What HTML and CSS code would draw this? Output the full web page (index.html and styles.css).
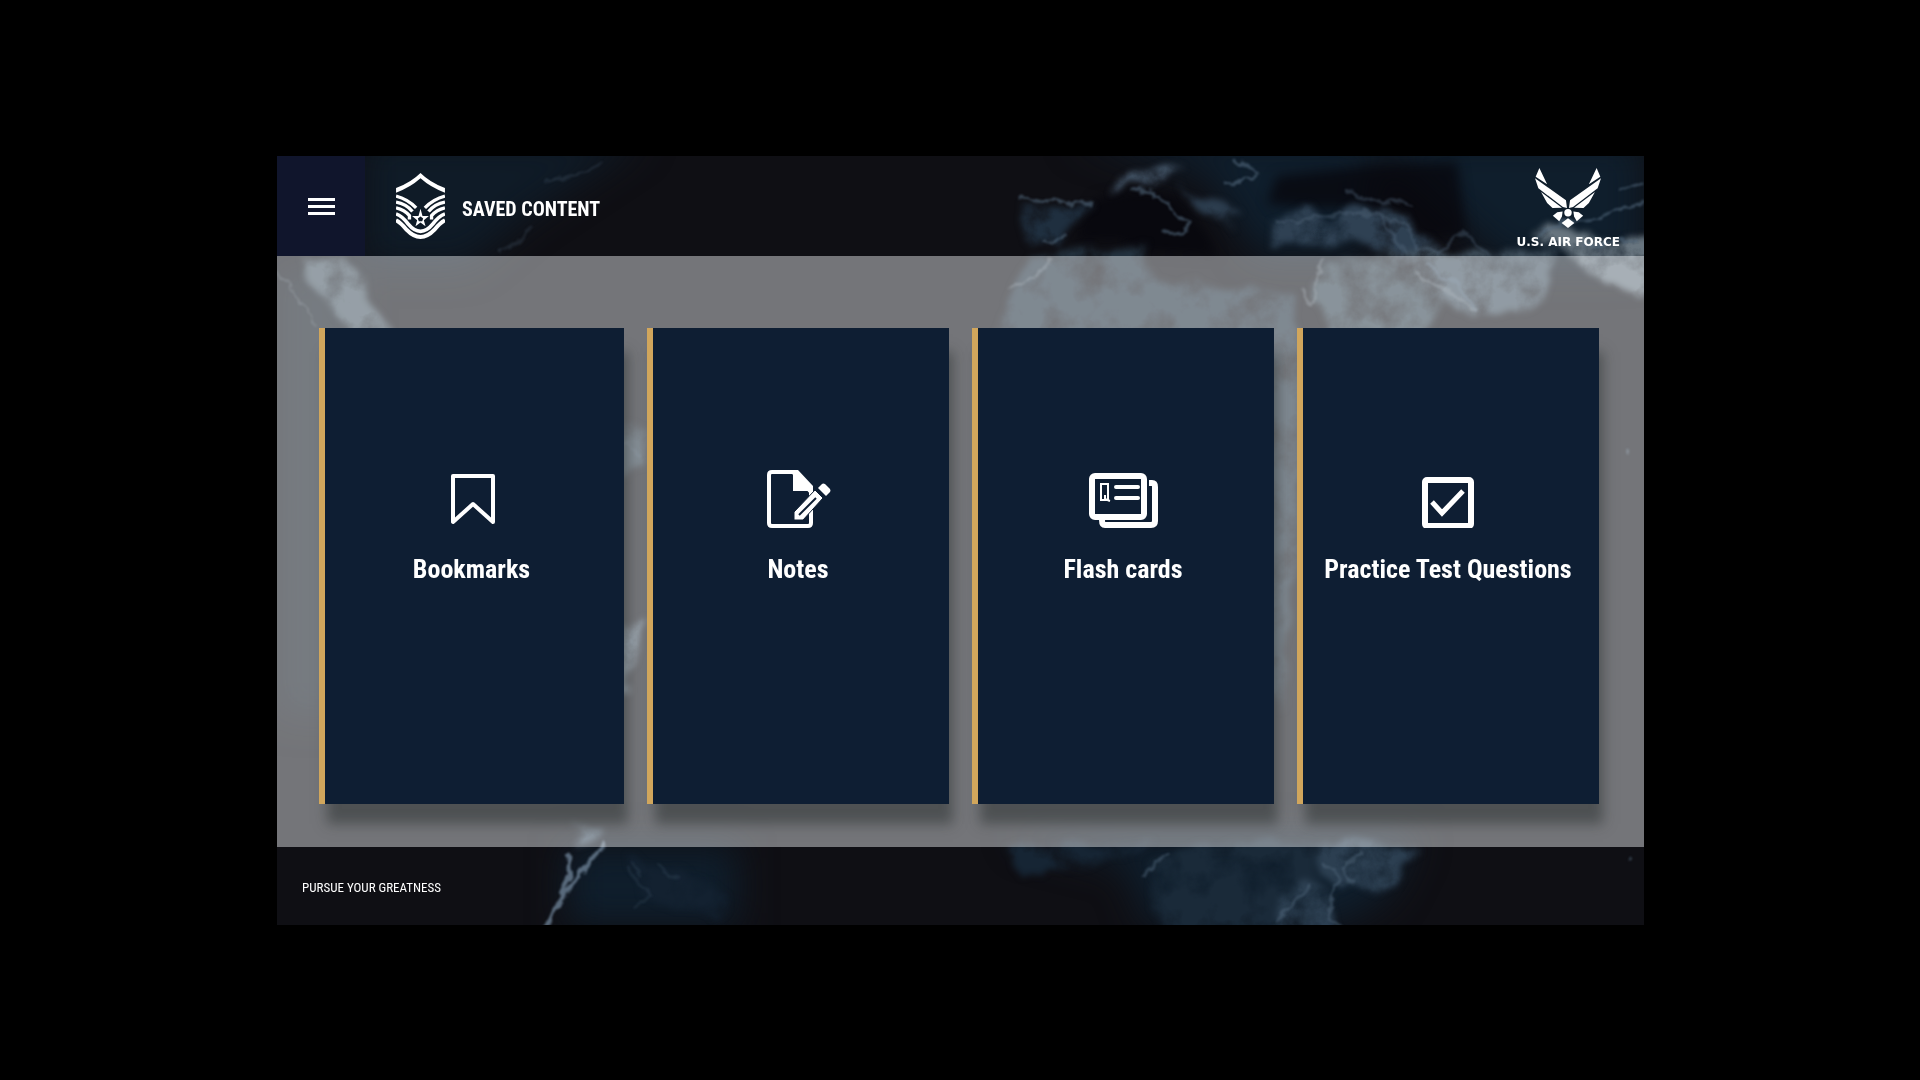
FILE: index.html
```html
<!DOCTYPE html>
<html lang="en">
<head>
<meta charset="utf-8">
<title>Saved Content</title>
<link rel="stylesheet" href="styles.css">
</head>
<body>
<div class="app">
  <svg class="map" viewBox="0 0 1367 769" preserveAspectRatio="none" aria-hidden="true">
    <defs>
      <filter id="land" x="-10%" y="-10%" width="120%" height="120%" color-interpolation-filters="sRGB">
        <feTurbulence type="fractalNoise" baseFrequency="0.03" numOctaves="5" seed="4" result="n"/>
        <feDisplacementMap in="SourceGraphic" in2="n" scale="26" xChannelSelector="R" yChannelSelector="G" result="d"/>
        <feGaussianBlur in="d" stdDeviation="3" result="b"/>
        <feColorMatrix in="n" type="matrix" values="0 0 0 0 0  0 0 0 0 0  0 0 0 0 0  2 0 0 0 -0.2" result="m"/>
        <feComposite in="b" in2="m" operator="in"/>
      </filter>
      <filter id="ridge" x="-10%" y="-10%" width="120%" height="120%" color-interpolation-filters="sRGB">
        <feTurbulence type="fractalNoise" baseFrequency="0.06" numOctaves="3" seed="9" result="n"/>
        <feDisplacementMap in="SourceGraphic" in2="n" scale="14" xChannelSelector="R" yChannelSelector="G" result="d"/>
        <feGaussianBlur in="d" stdDeviation="1"/>
      </filter>
      <filter id="soft" x="-30%" y="-30%" width="160%" height="160%" color-interpolation-filters="sRGB"><feGaussianBlur stdDeviation="18"/></filter>
      <filter id="sea" x="-10%" y="-30%" width="120%" height="160%" color-interpolation-filters="sRGB"><feGaussianBlur stdDeviation="6"/></filter>
    </defs>
    <rect width="1367" height="769" fill="#0f0f14"/>
    <g filter="url(#soft)" fill="#0f1e2c">
      <path d="M85-20H370L250 60 190 110H85Z" opacity=".8"/>
      <path d="M790-20H1367V110H1230L1100-10 1090 100H980L930 20Z"/>
      <path d="M290 690H460V769H290ZM730 680H1140L1110 740 1060 769H870L850 710Z"/>
      <path d="M0 110H80V560H0Z" fill="#16222c" opacity=".6"/>
    </g>
    <g fill="#08080e" filter="url(#sea)">
      <path d="M820 42 860 34 900 40 930 78 940 100 870 96 840 84 796 86 806 62Z"/>
      <path d="M1000 20 1090 10 1180 6 1190 80 1150 84 1120 52 1040 52 990 48Z" opacity=".8"/>
    </g>
    <g filter="url(#land)">
      <path fill="#1f2f3f" d="M744 44 817 50 800 64 784 89 746 83Z"/>
      <path fill="#46586b" d="M833 40 840 21 860 15 906 13 886 25 853 30 843 41Z"/>
      <path fill="#2c3d4e" d="M900 29 946 46 970 54 946 59 953 86 936 59 913 39Z"/>
      <path fill="#2f4153" d="M990 68 1033 53 1046 63 1090 53 1130 62 1170 102 1215 97 1253 100 1200 110 1113 102 1080 84 1043 84 1023 91 1010 86 996 88Z"/>
      <path fill="#23323f" d="M760 100 810 90 863 94 880 125 940 128 990 134 1020 145 1028 200 1015 480 1000 560 960 470 800 300 700 200 720 160Z"/>
      <path fill="#34444f" d="M1041 104 1113 101 1170 130 1150 180 1060 180 1036 144Z"/>
      <path fill="#42525f" d="M1103 95 1276 96 1280 127 1260 154 1197 157 1153 140 1120 107Z"/>
      <path fill="#68757f" d="M1253 84 1270 70 1303 76 1385 88V154L1336 131 1306 108Z"/>
      <path fill="#4a5964" d="M23 104 63 99 93 137 118 180H76L36 127Z"/>
      <path fill="#5b6d7c" d="M340 465 368 462 358 500 352 540H335Z"/>
      <path fill="#2c3a45" d="M340 270H368V310L345 320Z"/>
      <path fill="#3f5060" d="M295 668 330 672 316 692H300Z"/>
      <path fill="#162534" d="M726 686H880L850 700 750 722Z"/>
      <path fill="#1a2a39" d="M870 714 890 697 916 688H1036L1056 741 1050 785H880L873 737Z"/>
      <path fill="#2c3f51" d="M1036 688H1143L1120 724 1096 740 1060 730ZM1005 740 1036 722 1060 755V780H1000Z"/>
      <path fill="#132130" d="M350 700 405 712 450 740 440 762 370 745Z"/>
    </g>
    <g filter="url(#ridge)" fill="none" stroke="#52677b" stroke-width="3" stroke-linecap="round" stroke-linejoin="round">
      <path opacity=".6" d="M856 32 880 37 893 52 913 67 906 77 886 79M960 1 980 17 976 26 950 27M742 43 815 48M768 85 788 82"/>
      <path opacity=".4" d="M1070 36 1092 42 1135 50M1090 55 1130 70 1140 90 1160 96 1186 76 1213 98M1000 66 1050 62 1100 56 1128 98"/>
      <path opacity=".6" d="M1260 80 1285 66 1320 62 1367 46M1340 34 1367 26M1310 88 1360 84M1150 110 1180 130 1200 155"/>
      <path stroke="#7c8993" opacity=".4" d="M733 131 752 124 772 106M1026 132 1034 150M1036 148 1045 105M1140 115 1200 155"/>
      <path stroke="#7c8993" stroke-width="2" opacity=".3" d="M0 116 20 140 38 168"/>
      <path opacity=".25" d="M253 72 240 88 224 99M320 5 305 18 270 26M350 285 362 300"/>
      <path stroke="#6b8094" stroke-width="5" d="M326 690 308 711 285 742 270 775M290 703 292 720 284 738" opacity=".8"/>
      <path opacity=".2" d="M350 712 360 722 372 738 358 752M378 708 398 720M355 706 364 720"/>
      <path d="M866 722 880 706 890 700M1046 705 1060 725 1052 760 1064 774M1085 696 1066 712 1072 724M1000 765 1022 742 1034 728" opacity=".5"/>
      <path d="M1350 292V296M1352 702V704" opacity=".6"/>
    </g>
    <rect y="100" width="1367" height="591" fill="#fafcff" opacity=".43"/>
  </svg>

  <div class="screen">
    <header class="topbar">
      <button class="menu" type="button" aria-label="Menu"><span></span><span></span><span></span></button>
      <svg class="rank" viewBox="0 0 146 197" aria-hidden="true">
        <path fill="#fff" d="M0 45Q45 28 73 0Q101 28 146 45V59Q103 43 73 16Q43 43 0 59Z"/>
        <g fill="none" stroke="#fff" stroke-width="10">
          <path d="M0 69Q34 78 60 104M146 69Q112 78 86 104"/>
          <path d="M0 87Q30 92 49 115M146 87Q116 92 97 115"/>
          <path d="M0 104Q25 110 40 127V139M146 104Q121 110 106 127V139"/>
          <path d="M0 122Q18 128 36 152Q54 174 73 174Q92 174 110 152Q128 128 146 122" stroke-width="11"/>
          <path d="M0 141Q14 148 32 170Q52 191 73 191Q94 191 114 170Q132 148 146 141" stroke-width="12"/>
        </g>
        <path fill="#fff" fill-rule="evenodd" d="M73 107 79 128H98L83 141 88 159 73 148 58 159 63 141 48 128H67ZM73 130 65 136 68 144H78L81 136Z"/>
      </svg>
      <h1 class="title">SAVED CONTENT</h1>
      <div class="brand">
        <svg class="wings" viewBox="0 0 196 178" aria-hidden="true">
          <g fill="#fff">
            <path d="M13 0 36 48 2 26ZM0 30 92 96 95 119 83 116 10 60ZM18 71 80 118 52 119 36 104Z"/>
            <path d="M183 0 160 48 194 26ZM196 30 104 96 101 119 113 116 186 60ZM178 71 116 118 144 119 160 104Z"/>
            <circle cx="98" cy="133" r="11"/>
            <path d="M66 131 82 129 80 144 72 158 53 142ZM130 131 114 129 116 144 124 158 143 142ZM98 149 117 163 98 178 79 163Z"/>
          </g>
        </svg>
        <span>U.S. AIR FORCE</span>
      </div>
    </header>

    <main class="cards">
      <a class="card" href="#bookmarks">
        <svg viewBox="0 0 72 60" aria-hidden="true"><path d="M17 8H57V54L37 36 17 54Z" fill="none" stroke="#fff" stroke-width="4" stroke-linejoin="round"/></svg>
        <h2>Bookmarks</h2>
      </a>
      <a class="card" href="#notes">
        <svg viewBox="0 0 72 60" aria-hidden="true">
          <path d="M31 4H10Q7 4 7 7V55Q7 58 10 58H46Q49 58 49 55V24L31 4Z" fill="none" stroke="#fff" stroke-width="4"/>
          <path d="M31 2H36L51 18V23H31Z" fill="#fff"/>
          <path d="M32 44 53 22 61 30 41 52H32Z" fill="#fff" stroke="#0e1e33" stroke-width="1"/>
          <path d="M37 47 54 30" stroke="#0e1e33" stroke-width="2"/>
          <path d="M56 20 60 16Q61 15 63 16L68 21Q69 23 68 24L64 28Z" fill="#fff"/>
        </svg>
        <h2>Notes</h2>
      </a>
      <a class="card" href="#flashcards">
        <svg viewBox="0 0 72 60" aria-hidden="true">
          <rect x="5" y="8" width="52" height="41" rx="3" fill="none" stroke="#fff" stroke-width="6"/>
          <path d="M62 15H65Q68 15 68 19V53Q68 57 64 57H18Q15 57 15 52" fill="none" stroke="#fff" stroke-width="6"/>
          <path d="M29 19H51M29 30H51" stroke="#fff" stroke-width="4" stroke-linecap="round"/>
          <path d="M14 16H21V32H14ZM18 27V31L23 33" fill="none" stroke="#fff" stroke-width="2"/>
        </svg>
        <h2>Flash cards</h2>
      </a>
      <a class="card" href="#practice">
        <svg viewBox="0 0 72 60" aria-hidden="true">
          <rect x="13" y="12" width="46" height="46" rx="2" fill="none" stroke="#fff" stroke-width="6"/>
          <path d="M20 34 30 45 51 23" fill="none" stroke="#fff" stroke-width="5"/>
        </svg>
        <h2>Practice Test Questions</h2>
      </a>
    </main>

    <footer class="footer">PURSUE YOUR GREATNESS</footer>
  </div>
</div>
</body>
</html>
```
FILE: styles.css
```css
* { box-sizing: border-box; }

body {
  margin: 0;
  padding: 156px 276px 155px 277px;
  min-height: 100vh;
  display: grid;
  background: #000;
  color: #fff;
  font-family: "Agency FB", "Roboto Condensed", "Liberation Sans Narrow", "Liberation Sans", sans-serif;
}

/* The map and the screen share one grid cell */
.app { display: grid; overflow: hidden; }
.map, .screen { grid-area: 1 / 1; }
.map { width: 100%; height: 0; min-height: 100%; }
.screen {
  position: relative;
  display: grid;
  grid-template-rows: 100px 1fr 78px;
}

.topbar { display: flex; align-items: center; }
.menu {
  align-self: stretch;
  width: 88px;
  padding: 0;
  border: 0;
  background: #10152c;
  display: flex;
  flex-direction: column;
  align-items: center;
  justify-content: center;
  gap: 4px;
}
.menu span { width: 27px; height: 3px; background: #fff; }
.rank { width: 49px; height: 66px; margin-left: 31px; }
.title { margin: 0 0 0 17px; padding-top: 6px; font-size: 20px; line-height: 28px; font-weight: 700; white-space: nowrap; }
.brand {
  margin-left: auto;
  margin-right: 24px;
  padding-top: 4px;
  display: flex;
  flex-direction: column;
  align-items: center;
  gap: 7px;
  font: 700 12px/14px "DejaVu Sans", sans-serif;
  white-space: nowrap;
}
.wings { width: 66px; height: 60px; }

.cards {
  display: grid;
  grid-template-columns: 305fr 302fr 302fr 302fr;
  gap: 23px;
  padding: 72px 45px 43px 42px;
}
.card {
  display: flex;
  flex-direction: column;
  align-items: center;
  padding: 140px 6px 0 0;
  background: #0e1e33;
  border-left: 6px solid #d1a65c;
  box-shadow: 6px 22px 12px -2px rgba(40, 45, 45, .5);
  color: #fff;
  text-decoration: none;
}
.card svg { width: 72px; height: 60px; }
.card h2 { margin: 25px 0 0; font-size: 26px; line-height: 32px; font-weight: 700; white-space: nowrap; }

.footer { padding: 31px 25px 27px; font-size: 13px; line-height: 20px; }
```
